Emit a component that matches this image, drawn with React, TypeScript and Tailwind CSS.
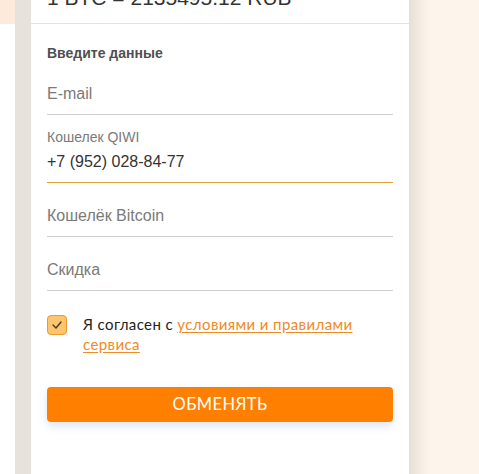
const sans = { fontFamily: '"Liberation Sans", Arial, sans-serif' };
const round = { fontFamily: 'Lato, sans-serif' };

function Field({ placeholder }: { placeholder: string }) {
  return (
    <div className="h-[54px] flex items-end border-b border-[#cfcfcf]">
      <span className="text-[16px] leading-[20px] text-[#7a7a7a] pb-[10px]">{placeholder}</span>
    </div>
  );
}

export default function App() {
  return (
    <div className="w-[479px] h-[474px] flex overflow-hidden bg-white" style={sans}>
      <div className="w-[15px] flex flex-col">
        <div className="h-[24px] bg-[#fdeadb]" />
        <div className="flex-1 bg-white" />
      </div>
      <div className="w-[16px] bg-[#e7e3dc]" />

      <div className="w-[378px] bg-white flex flex-col">
        <div className="h-[24px] border-b border-[#e3e3e3] overflow-hidden px-4">
          <div className="text-[21px] leading-[20px] text-[#333] -mt-[12px]">1 BTC = 2135495.12 RUB</div>
        </div>

        <div className="px-4 pt-[21px]">
          <div className="text-[14px] leading-[16px] font-bold text-[#505050]">Введите данные</div>

          <Field placeholder="E-mail" />

          <div className="border-b border-[#e2a535] pt-[13px] pb-[10px]">
            <div className="text-[14px] leading-[18px] text-[#7a7a7a]">Кошелек QIWI</div>
            <div className="text-[16px] leading-[20px] text-[#333] mt-[6px]">+7 (952) 028-84-77</div>
          </div>

          <Field placeholder="Кошелёк Bitcoin" />
          <Field placeholder="Скидка" />

          <div className="flex gap-4 mt-[24px]" style={round}>
            <div className="w-[20px] h-[20px] shrink-0 rounded-[4px] bg-[#fdc56d] border border-[#f0982c] flex items-center justify-center">
              <svg width="12" height="10" viewBox="0 0 12 10" fill="none">
                <path d="M2 5 L5 8 L10 2" stroke="#4a3a22" strokeWidth="1.4" strokeLinecap="round" strokeLinejoin="round" />
              </svg>
            </div>
            <div className="text-[15px] leading-[20px] text-[#222] -mt-[1px] tracking-[0.4px]">
              Я согласен с{' '}
              <a href="#" className="text-[#f08a24] underline underline-offset-2">
                условиями и правилами сервиса
              </a>
            </div>
          </div>

          <button
            className="mt-[33px] w-full h-[35px] rounded-[4px] bg-[#ff8000] text-white text-[16.5px] tracking-[0.4px] shadow-[0_4px_8px_rgba(120,150,200,0.25)]"
            style={round}
          >
            ОБМЕНЯТЬ
          </button>
        </div>
      </div>

      <div className="flex-1 bg-[linear-gradient(to_right,#e6dfd4,#f7efe5_14px,#fdf5eb_20px)]" />
    </div>
  );
}
